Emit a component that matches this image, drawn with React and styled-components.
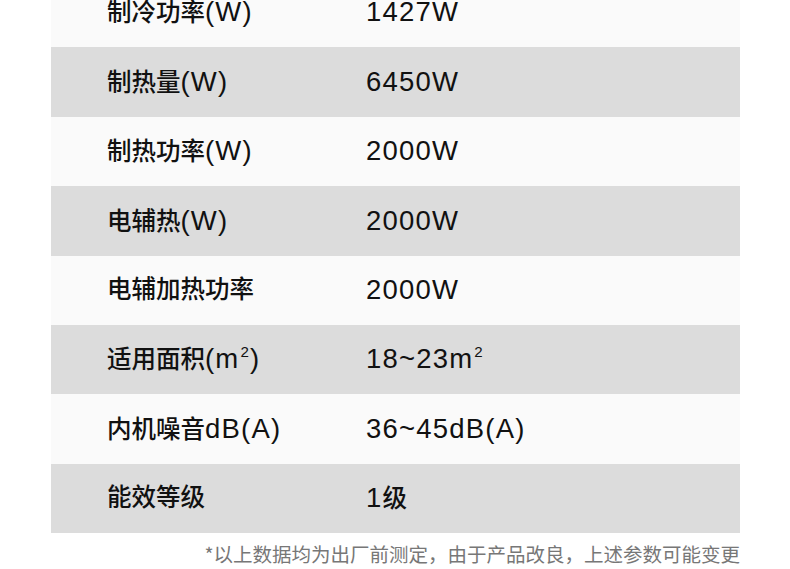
import React from 'react';
import styled, { createGlobalStyle } from 'styled-components';

const GlobalStyle = createGlobalStyle`
  html, body {
    margin: 0;
    padding: 0;
    background: #ffffff;
  }
  body {
    font-family: "Liberation Sans", "Noto Sans CJK SC", sans-serif;
    color: #111111;
  }
`;

const Page = styled.div`
  width: 790px;
  height: 569px;
  overflow: hidden;
  background: #ffffff;
`;

const Table = styled.div`
  margin: -22px 50px 0 51px;
  display: flex;
  flex-direction: column;
`;

const Row = styled.div`
  display: grid;
  grid-template-columns: 259px 1fr;
  align-items: center;
  height: 69.4px;
  padding: 0 0 1px 56px;
  box-sizing: border-box;
  background: ${(p) => (p.$shaded ? '#dcdcdc' : '#fafafa')};
`;

const Label = styled.div`
  font-family: "Liberation Sans", "Noto Sans CJK SC", sans-serif;
  font-size: 24.5px;
  font-weight: 500;
  line-height: 1;
  white-space: nowrap;

  b {
    font-weight: 400;
    font-size: 27.5px;
    letter-spacing: 1.2px;
  }
`;

const Value = styled.div`
  font-family: "Liberation Sans", "Noto Sans CJK SC", sans-serif;
  font-size: 27.5px;
  letter-spacing: 1.2px;
  line-height: 1;
  white-space: nowrap;

  span {
    font-family: "Noto Sans CJK SC", sans-serif;
    font-size: 24.5px;
    font-weight: 500;
    letter-spacing: 0;
  }
`;

const Sup = styled.sup`
  font-size: 0.55em;
  vertical-align: 0.75em;
  line-height: 0;
  margin-left: 1px;
`;

const Note = styled.p`
  margin: 9px 50px 0 0;
  text-align: right;
  font-family: "Noto Sans CJK SC", sans-serif;
  font-size: 19.5px;
  line-height: 24px;
  color: #777777;
`;

const rows = [
  { label: <>制冷功率<b>(W)</b></>, value: '1427W' },
  { label: <>制热量<b>(W)</b></>, value: '6450W' },
  { label: <>制热功率<b>(W)</b></>, value: '2000W' },
  { label: <>电辅热<b>(W)</b></>, value: '2000W' },
  { label: '电辅加热功率', value: '2000W' },
  {
    label: (
      <>
        适用面积<b>(m<Sup>2</Sup>)</b>
      </>
    ),
    value: (
      <>
        18~23m<Sup>2</Sup>
      </>
    ),
  },
  { label: <>内机噪音<b>dB(A)</b></>, value: '36~45dB(A)' },
  { label: '能效等级', value: <>1<span>级</span></> },
];

export default function App() {
  return (
    <Page>
      <GlobalStyle />
      <Table>
        {rows.map((r, i) => (
          <Row key={i} $shaded={i % 2 === 1}>
            <Label>{r.label}</Label>
            <Value>{r.value}</Value>
          </Row>
        ))}
      </Table>
      <Note>*以上数据均为出厂前测定，由于产品改良，上述参数可能变更</Note>
    </Page>
  );
}
